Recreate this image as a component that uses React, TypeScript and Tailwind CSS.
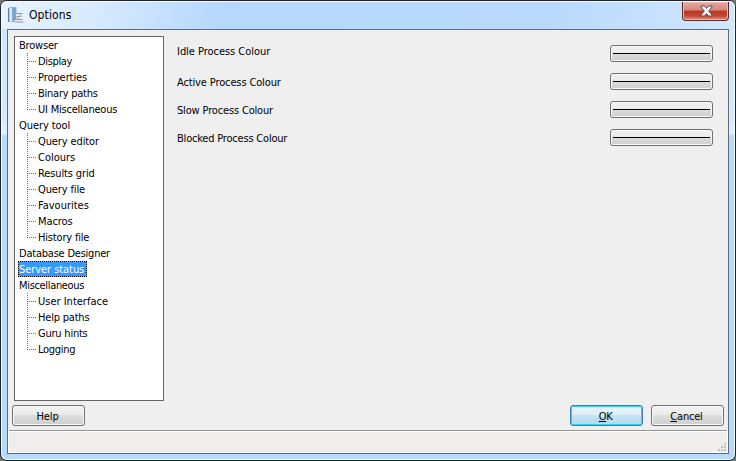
type Item = { name: string; tracking: string };
type Group = Item & { children: Item[]; selected?: boolean };

const tree: Group[] = [
  {
    name: 'Browser',
    tracking: 'tracking-[-0.2px]',
    children: [
      { name: 'Display', tracking: 'tracking-[-0.35px]' },
      { name: 'Properties', tracking: 'tracking-[-0.08px]' },
      { name: 'Binary paths', tracking: 'tracking-[-0.25px]' },
      { name: 'UI Miscellaneous', tracking: 'tracking-[-0.22px]' },
    ],
  },
  {
    name: 'Query tool',
    tracking: 'tracking-[-0.08px]',
    children: [
      { name: 'Query editor', tracking: 'tracking-[-0.12px]' },
      { name: 'Colours', tracking: 'tracking-[0px]' },
      { name: 'Results grid', tracking: 'tracking-[-0.12px]' },
      { name: 'Query file', tracking: 'tracking-[-0.12px]' },
      { name: 'Favourites', tracking: 'tracking-[0px]' },
      { name: 'Macros', tracking: 'tracking-[-0.1px]' },
      { name: 'History file', tracking: 'tracking-[-0.18px]' },
    ],
  },
  { name: 'Database Designer', tracking: 'tracking-[-0.22px]', children: [] },
  { name: 'Server status', tracking: 'tracking-[-0.06px]', children: [], selected: true },
  {
    name: 'Miscellaneous',
    tracking: 'tracking-[-0.33px]',
    children: [
      { name: 'User Interface', tracking: 'tracking-[0px]' },
      { name: 'Help paths', tracking: 'tracking-[-0.2px]' },
      { name: 'Guru hints', tracking: 'tracking-[-0.22px]' },
      { name: 'Logging', tracking: 'tracking-[-0.3px]' },
    ],
  },
];

const labels = [
  { text: 'Idle Process Colour', style: 'h-[34px] tracking-[-0.04px]' },
  { text: 'Active Process Colour', style: 'h-7 tracking-[-0.13px]' },
  { text: 'Slow Process Colour', style: 'h-7 tracking-[-0.16px]' },
  { text: 'Blocked Process Colour', style: 'h-7 tracking-[-0.2px]' },
];

const face =
  'rounded-[3px] border border-[#707070] bg-[linear-gradient(#f2f2f2_0%,#ebebeb_49%,#dddddd_50%,#cfcfcf_100%)] shadow-[inset_0_0_0_1px_#fafafa]';

function ServerIcon() {
  return (
    <svg width="16" height="16" viewBox="0 0 16 16">
      <path d="M0 1.5 2 0h6.5v14l-1 1H0z" fill="#8fb0da" />
      <path d="M0 1.5h1.3V15H0z" fill="#5f7ea8" />
      <path d="M1.5 1h2.7v13.5H1.5z" fill="#dcebfb" />
      <path d="M4.3 1h3.4v13.5H4.3z" fill="#7ba2d3" />
      <path d="M8 6h6.500v3l-1 3 2 1v2.500H6v-2l2.500-1.500L10 9H8z" fill="#eceded" />
      <path d="M8 6.500h6.500M8.500 9.500h5M6.500 12.500h8M6 15h9.500" stroke="#8b9098" strokeWidth=".9" />
      <path d="m13 7-3.500 5" stroke="#a4a8b0" />
    </svg>
  );
}

function Child({ item, last }: { item: Item; last: boolean }) {
  return (
    <div className="flex h-4 items-center pl-[12px]">
      <svg width="9" height="16" className="shrink-0" shapeRendering="crispEdges">
        <path d={last ? 'M.5 0V9' : 'M.5 0V16'} stroke="#707070" strokeDasharray="1 1" />
        <path d="M0 8.5H9" stroke="#707070" strokeDasharray="1 1" />
      </svg>
      <span className={'pt-[2px] pl-[2px] ' + item.tracking}>{item.name}</span>
    </div>
  );
}

export default function App() {
  return (
    <div className="h-[461px] w-[736px] overflow-hidden bg-[#77736f] font-['DejaVu_Sans_Condensed','DejaVu_Sans',sans-serif] text-[11px] leading-4 tracking-[-0.3px] whitespace-nowrap text-black">
      <div className="flex h-full flex-col rounded-[7px] border border-[#20252d] bg-[linear-gradient(#d0e6fd_0px,#d6e9fe_120px,#e7f4ff_133px,#b7dafc_134px,#b7dafc_100%)] pr-[6px] pb-[6px] pl-[6px] shadow-[inset_0_0_0_1px_#f4faff]">
        <header className="-mr-[6px] -ml-[6px] flex h-7 shrink-0 items-start justify-between rounded-t-[6px] border-x border-t border-[#f4faff] bg-[linear-gradient(100deg,#e7f3ff_0%,#d9ebff_12%,#b5d8fc_30%,#b9dafd_75%,#d0e7ff_100%)] pr-[5px] pl-[6px]">
          <div className="flex items-center pt-[5px]">
            <ServerIcon />
            <span className="pl-[5px] text-[12px] tracking-[0.1px]">Options</span>
          </div>
          <button className="flex h-[19px] w-[47px] items-center justify-center rounded-b-[4px] border border-t-0 border-[#542b31] bg-[linear-gradient(#e6aaa1_0%,#d5877c_45%,#bd3726_50%,#c24532_75%,#df9079_100%)] pl-[2px] shadow-[inset_0_0_0_1px_#efb9af]">
            <svg width="13" height="12" viewBox="0 0 13 12">
              <path d="M1 1h3.5l2 2.4L8.5 1H12v1L8.7 6 12 10v1H8.5l-2-2.4-2 2.4H1v-1l3.3-4L1 2z" fill="#f4f4f4" stroke="#4b5160" />
            </svg>
          </button>
        </header>
        <main className="flex min-h-0 flex-1 flex-col border border-[#5d6b7b] bg-[#efefef]">
          <div className="flex h-[371px] shrink-0 pt-[6px] pl-[6px]">
            <nav className="h-[365px] w-[150px] border border-[#646464] bg-white">
              {tree.map((group) => (
                <div key={group.name}>
                  <div className={'flex h-4 pl-[2px] ' + group.tracking}>
                    {group.selected ? (
                      <span className="ml-px flex w-[69px] border border-dotted border-black bg-[#f0922a]">
                        <span className="h-[14px] flex-1 bg-[#3399ff] leading-[15px] text-white">{group.name}</span>
                      </span>
                    ) : (
                      <span className="px-[2px] pt-px">{group.name}</span>
                    )}
                  </div>
                  {group.children.map((item, i) => (
                    <Child key={item.name} item={item} last={i === group.children.length - 1} />
                  ))}
                </div>
              ))}
            </nav>
            <section className="flex flex-1 justify-between pr-[15px] pl-[13px]">
              <div className="-mt-px">
                {labels.map((label) => (
                  <div key={label.text} className={'flex items-center ' + label.style}>
                    {label.text}
                  </div>
                ))}
              </div>
              <div className="flex flex-col gap-[11px] pt-[9px]">
                {labels.map((label) => (
                  <button key={label.text} aria-label={label.text} className={'flex h-[17px] w-[103px] items-center px-[2px] ' + face}>
                    <span className="h-px w-full bg-black" />
                  </button>
                ))}
              </div>
            </section>
          </div>
          <div className="flex h-[29px] shrink-0 items-start gap-2 pt-[4px] pr-[4px] pl-[4px]">
            <button className={'mr-auto h-[21px] w-[73px] pt-[2px] pr-[2px] tracking-[-0.1px] ' + face}>Help</button>
            <button className="h-[21px] w-[73px] rounded-[3px] border border-[#3c7fb1] bg-[linear-gradient(#edf5fa_0%,#dceef8_49%,#c4e4f3_50%,#b1d9ec_100%)] pt-[2px] pr-[2px] shadow-[inset_0_0_0_1px_#35cdf5]">
              <u>O</u>K
            </button>
            <button className={'h-[21px] w-[73px] pt-[2px] pr-[2px] tracking-[-0.2px] ' + face}>
              <u>C</u>ancel
            </button>
          </div>
          <footer className="flex flex-1 items-end justify-end border border-t-0 border-white bg-[#f0eded] shadow-[inset_0_1px_0_#929292,inset_0_2px_0_#fff]">
            <svg width="10" height="10" shapeRendering="crispEdges">
              <path d="M7 1h2v2H7zM4 4h2v2H4zM7 4h2v2H7zM1 7h2v2H1zM4 7h2v2H4zM7 7h2v2H7z" fill="#c0bebe" />
            </svg>
          </footer>
        </main>
      </div>
    </div>
  );
}
